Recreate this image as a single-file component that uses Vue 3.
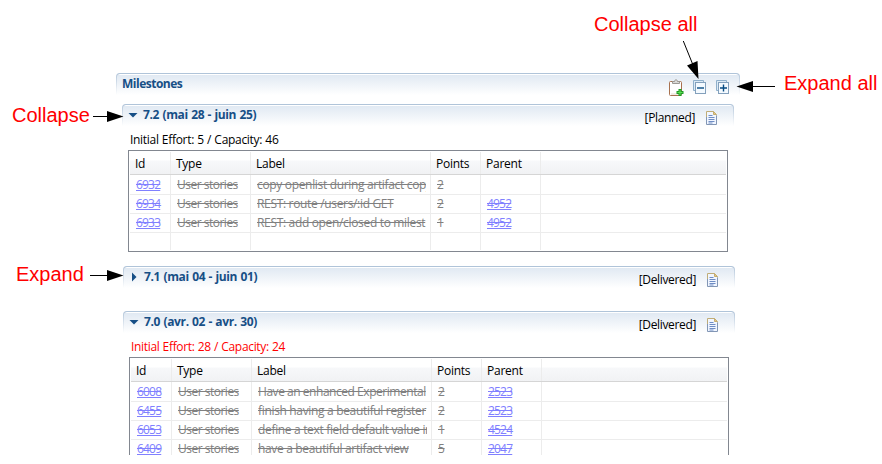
<script setup>
const columns = ['Id', 'Type', 'Label', 'Points', 'Parent', '']

const sections = [
  {
    title: '7.2 (mai 28 - juin 25)',
    status: '[Planned]',
    open: true,
    effort: 'Initial Effort: 5 / Capacity: 46',
    spare: true,
    rows: [
      { id: '6932', label: 'copy openlist during artifact copy', points: '2', parent: '' },
      { id: '6934', label: 'REST: route /users/:id GET', points: '2', parent: '4952' },
      { id: '6933', label: 'REST: add open/closed to milest', points: '1', parent: '4952' },
    ],
  },
  {
    title: '7.1 (mai 04 - juin 01)',
    status: '[Delivered]',
    open: false,
    shifted: true,
    rows: [],
  },
  {
    title: '7.0 (avr. 02 - avr. 30)',
    status: '[Delivered]',
    open: true,
    shifted: true,
    over: true,
    effort: 'Initial Effort: 28 / Capacity: 24',
    rows: [
      { id: '6008', label: 'Have an enhanced Experimental', points: '2', parent: '2523', tight: true },
      { id: '6455', label: 'finish having a beautiful register', points: '2', parent: '2523' },
      { id: '6053', label: 'define a text field default value in', points: '1', parent: '4524' },
      { id: '6409', label: 'have a beautiful artifact view', points: '5', parent: '2047' },
    ],
  },
]
</script>

<template>
  <div class="page">
    <main class="viewer">
      <header class="bar main-bar">
        <h1 class="title">Milestones</h1>
        <div class="tools">
          <svg width="16" height="18" viewBox="0 0 16 18">
            <rect x="1.500" y="2.500" width="12" height="14" rx="1" fill="#fff" stroke="#a8714f" />
            <path d="M3 15h8" stroke="#e4d8ce" />
            <path d="M4.500 4.500v-2h2c0-2.200 3-2.200 3 0h2v2z" fill="#d9d9d7" stroke="#9b9894" />
            <path d="M12 10v7M8.500 13.500h7" stroke="#1f9a25" stroke-width="3" />
            <path d="M12 11v5M9.500 13.500h5" stroke="#5fe056" stroke-width="1" />
          </svg>
          <svg width="14" height="15" viewBox="0 0 14 15">
            <path d="M.5 10.500v-10h10v2M.5 10.500h2" fill="none" stroke="#8fb0cc" />
            <path d="M1 1h9v2H3v7H1z" fill="#dceaf5" />
            <rect x="2.500" y="2.500" width="10" height="11" fill="#f4faff" stroke="#83a0bc" />
            <path d="M4 8h7" stroke="#064b83" stroke-width="1.400" />
          </svg>
          <svg width="14" height="15" viewBox="0 0 14 15">
            <path d="M.5 10.500v-10h10v2M.5 10.500h2" fill="none" stroke="#8fb0cc" />
            <path d="M1 1h9v2H3v7H1z" fill="#dceaf5" />
            <rect x="2.500" y="2.500" width="10" height="11" fill="#f4faff" stroke="#83a0bc" />
            <path d="M4 8h7M7.500 4.500v7" stroke="#064b83" stroke-width="1.400" />
          </svg>
        </div>
      </header>

      <section
        v-for="s in sections"
        :key="s.title"
        class="section"
        :class="{ shifted: s.shifted, open: s.open }"
      >
        <div class="bar">
          <svg class="twistie" width="10" height="10" viewBox="0 0 10 10">
            <path v-if="s.open" d="M.5 3h9L5 7.500z" fill="#174f86" />
            <path v-else d="M3 .5v9L7.500 5z" fill="#174f86" />
          </svg>
          <h2 class="title">{{ s.title }}</h2>
          <span class="status">{{ s.status }}</span>
          <svg class="doc" width="12" height="15" viewBox="0 0 12 15">
            <path d="M.5.5h7l3 4v9H.5z" fill="#f1f6ff" />
            <path d="M.5 8V.5h7l3 4" fill="none" stroke="#c0ad78" />
            <path d="M.5 6v7.500h10V4.500" fill="none" stroke="#8296b5" />
            <path d="M7.500.5v3h3z" fill="#e7c883" stroke="#c5ad70" />
            <path d="M2.500 4.500h4M2.500 6.500h6M2.500 8.500h6M2.500 10.500h6M2.500 12h4" stroke="#6f8dc4" />
          </svg>
        </div>
        <template v-if="s.open">
          <p class="effort" :class="{ over: s.over }">{{ s.effort }}</p>
          <div class="table">
            <div class="row head">
              <span v-for="c in columns" :key="c" class="cell">{{ c }}</span>
            </div>
            <div v-for="r in s.rows" :key="r.id" class="row">
              <span class="cell"><a class="link">{{ r.id }}</a></span>
              <span class="cell type"><s>User stories</s></span>
              <span class="cell label" :class="{ tight: r.tight }"><s class="clip">{{ r.label }}</s></span>
              <span class="cell"><s>{{ r.points }}</s></span>
              <span class="cell"><a v-if="r.parent" class="link">{{ r.parent }}</a></span>
              <span class="cell"></span>
            </div>
            <div v-if="s.spare" class="row spare">
              <span v-for="c in columns" :key="c" class="cell"></span>
            </div>
          </div>
        </template>
      </section>
    </main>

    <span class="note collapse-all">Collapse all</span>
    <span class="note expand-all">Expand all</span>
    <span class="note collapse">Collapse</span>
    <span class="note expand">Expand</span>
    <svg class="arrows" width="882" height="464" viewBox="0 0 882 464">
      <g stroke="#000" stroke-width="1">
        <path d="M683.300 41L693 65M775 86.500H752M93 116.500h15M90 275.500h18" />
      </g>
      <path d="M698.500 79l-11.500-13.500 10.500-4.500zM736.500 86.500l16.500-5.500v11zM123.500 116.500l-16.500-5.500v11zM123.500 275.500l-16.500-5.500v11z" />
    </svg>
  </div>
</template>

<style>
body {
  margin: 0;
  background: #fff;
}
</style>

<style scoped>
.page {
  position: relative;
  width: 882px;
  height: 464px;
  overflow: hidden;
  background: #fff;
  font-family: "Open Sans", "Noto Sans", sans-serif;
  font-size: 12px;
  color: #000;
}
.viewer {
  box-sizing: border-box;
  width: 882px;
  height: 455px;
  padding: 73px 0 0 116px;
  overflow: hidden;
}
.bar {
  box-sizing: border-box;
  display: flex;
  width: 612px;
  height: 22px;
  border: 1px solid transparent;
  border-top-color: #b0c4d9;
  border-bottom: 0;
  border-radius: 4px 4px 0 0;
  background:
    linear-gradient(#fff, #fff) padding-box top / 100% 1px no-repeat,
    linear-gradient(#dfe8f2, #fff) padding-box,
    linear-gradient(#b0c4d9, #fff) border-box;
}
.main-bar {
  width: 624px;
  margin-bottom: 9px;
}
.title {
  margin: 0;
  font-size: 12px;
  line-height: 20px;
  font-weight: 700;
  letter-spacing: -0.35px;
  word-spacing: 0.6px;
  color: #174f86;
  white-space: nowrap;
}
.main-bar .title {
  padding-left: 5px;
  letter-spacing: -0.5px;
}
.tools {
  display: flex;
  align-items: flex-start;
  gap: 9px;
  margin-left: auto;
  padding: 5px 9px 0 0;
}
.tools svg {
  flex: none;
}
.tools svg + svg {
  margin-top: 1px;
}
.section {
  width: 612px;
  height: 45px;
  margin-left: 6px;
}
.section.shifted {
  margin-left: 7px;
}
.section.open {
  height: 162px;
}
.twistie {
  flex: none;
  margin: 5px 5px 0 5px;
}
.status {
  margin-left: auto;
  padding-top: 3px;
  line-height: 20px;
  letter-spacing: -0.35px;
}
.doc {
  flex: none;
  margin: 6px 15px 0 11px;
}
.effort {
  margin: 0;
  padding: 4px 0 0 8px;
  height: 20px;
  line-height: 20px;
  letter-spacing: -0.3px;
  word-spacing: 0.4px;
}
.effort.over {
  letter-spacing: -0.33px;
  color: #f00;
}
.table {
  box-sizing: border-box;
  width: 600px;
  margin-left: 6px;
  padding: 1px;
  border: 1px solid #828790;
  overflow: hidden;
}
.row {
  box-sizing: border-box;
  display: grid;
  grid-template-columns: 41px 80px 180px 50px 60px 1fr;
  height: 19px;
  border-bottom: 1px solid #ececec;
}
.cell {
  padding-left: 6px;
  border-right: 1px solid #ececec;
  line-height: 18px;
  overflow: hidden;
  white-space: nowrap;
  letter-spacing: -0.33px;
  color: #808080;
}
.cell:last-child {
  border-right: 0;
}
.type {
  letter-spacing: -0.5px;
}
.head {
  height: 23px;
  border-bottom-color: #d5d5d5;
  background: linear-gradient(#fff 0 8px, #f7f8fa 9px, #f1f2f4);
}
.head .cell {
  padding-left: 5px;
  line-height: 23px;
  letter-spacing: -0.25px;
  color: #000;
}
.head + .row {
  height: 20px;
}
.head + .row .cell {
  line-height: 20px;
}
.spare {
  height: 17px;
  border-bottom: 0;
}
.label {
  padding-right: 4px;
}
.label.tight {
  letter-spacing: -0.46px;
}
.clip {
  display: block;
  overflow: hidden;
}
.link {
  color: #8080ff;
  letter-spacing: -0.8px;
  text-decoration: underline line-through;
}
.note {
  position: absolute;
  font-family: "Liberation Sans", Arial, sans-serif;
  font-size: 20px;
  line-height: 24px;
  color: #f00;
  white-space: nowrap;
}
.collapse-all {
  left: 594px;
  top: 12px;
}
.expand-all {
  left: 784px;
  top: 71px;
}
.collapse {
  left: 12px;
  top: 103px;
}
.expand {
  left: 16px;
  top: 262px;
}
.arrows {
  position: absolute;
  left: 0;
  top: 0;
  pointer-events: none;
}
</style>
